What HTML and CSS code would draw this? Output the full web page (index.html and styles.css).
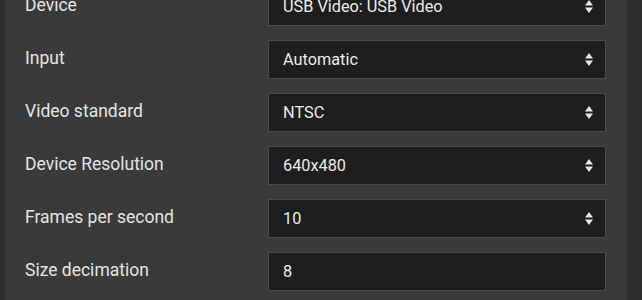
FILE: index.html
```html
<!DOCTYPE html>
<html lang="en">
<head>
  <meta charset="UTF-8">
  <title>Video Capture Settings</title>
  <link rel="stylesheet" href="styles.css">
</head>
<body>

<div class="panel">
  <div class="settings">
    <div class="row">
      <label class="label">Device</label>
      <div class="field select">
        <span>USB Video: USB Video</span>
        <svg class="arrows" width="8" height="13" viewBox="0 0 8 13"><path d="M4 0 L8 5.5 L0 5.5 Z M0 7.5 L8 7.5 L4 13 Z" fill="#e6e6e6"/></svg>
      </div>
    </div>
    <div class="row">
      <label class="label">Input</label>
      <div class="field select">
        <span>Automatic</span>
        <svg class="arrows" width="8" height="13" viewBox="0 0 8 13"><path d="M4 0 L8 5.5 L0 5.5 Z M0 7.5 L8 7.5 L4 13 Z" fill="#e6e6e6"/></svg>
      </div>
    </div>
    <div class="row">
      <label class="label">Video standard</label>
      <div class="field select">
        <span>NTSC</span>
        <svg class="arrows" width="8" height="13" viewBox="0 0 8 13"><path d="M4 0 L8 5.5 L0 5.5 Z M0 7.5 L8 7.5 L4 13 Z" fill="#e6e6e6"/></svg>
      </div>
    </div>
    <div class="row">
      <label class="label">Device Resolution</label>
      <div class="field select">
        <span>640x480</span>
        <svg class="arrows" width="8" height="13" viewBox="0 0 8 13"><path d="M4 0 L8 5.5 L0 5.5 Z M0 7.5 L8 7.5 L4 13 Z" fill="#e6e6e6"/></svg>
      </div>
    </div>
    <div class="row">
      <label class="label">Frames per second</label>
      <div class="field select">
        <span>10</span>
        <svg class="arrows" width="8" height="13" viewBox="0 0 8 13"><path d="M4 0 L8 5.5 L0 5.5 Z M0 7.5 L8 7.5 L4 13 Z" fill="#e6e6e6"/></svg>
      </div>
    </div>
    <div class="row">
      <label class="label">Size decimation</label>
      <div class="field">
        <span>8</span>
      </div>
    </div>
  </div>
</div>

</body>
</html>
```

FILE: styles.css
```css
html, body {
  height: 100%;
}
body {
  margin: 0;
  background-color: #2e2e2e;
  font-family: Roboto, "Liberation Sans", sans-serif;
  overflow: hidden;
}
.panel {
  display: flow-root;
  margin-left: 5px;
  width: 622px;
  height: 100%;
  background-color: #3a3a3a;
}
.settings {
  display: flex;
  flex-direction: column;
  gap: 14px;
  margin-top: -13px;
  padding: 0 21px 0 20px;
}
.row {
  display: flex;
  align-items: center;
  height: 39px;
}
.label {
  width: 243px;
  color: #e4e4e4;
  font-size: 17.5px;
  margin-top: -3px;
}
.field {
  flex: 1;
  box-sizing: border-box;
  height: 39px;
  display: flex;
  align-items: center;
  justify-content: space-between;
  padding: 0 12px 0 14px;
  background-color: #1e1e1e;
  border: 1px solid #4a4a4a;
  color: #ebebeb;
  font-size: 16.3px;
}
.arrows {
  display: block;
}
```
